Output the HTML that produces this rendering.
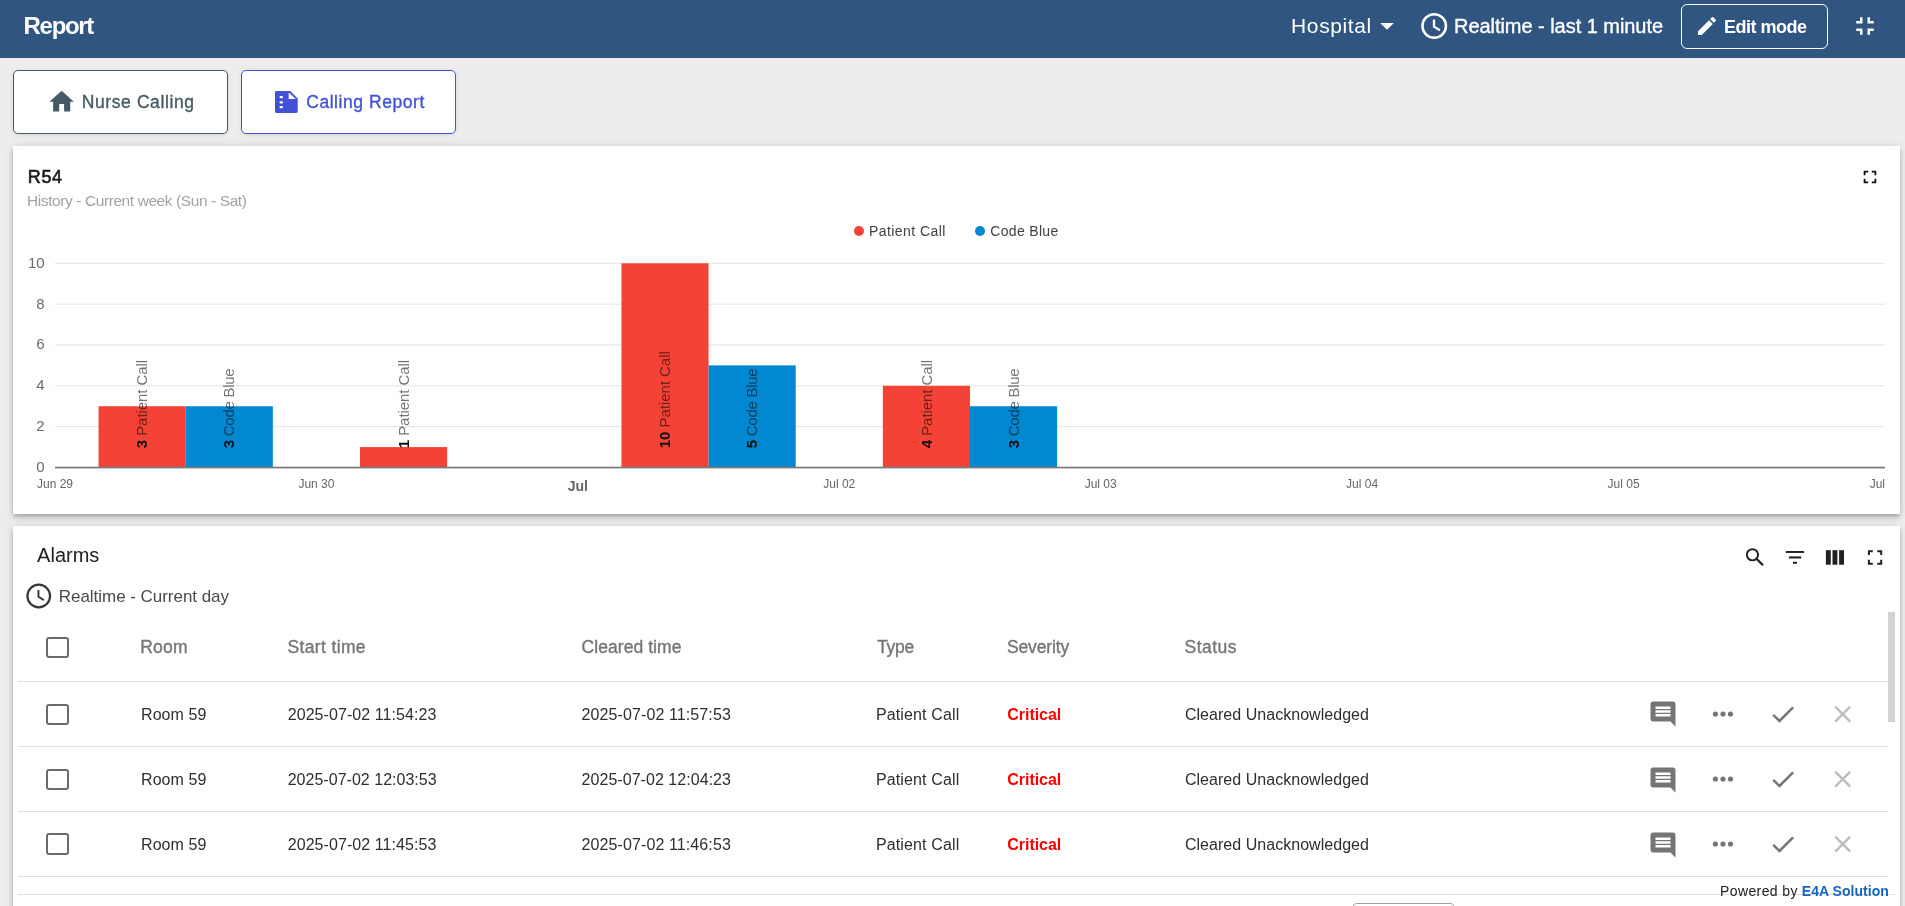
<!DOCTYPE html>
<html><head><meta charset="utf-8">
<style>
*{box-sizing:border-box;margin:0;padding:0}
html,body{width:1905px;height:906px;overflow:hidden}
body{background:#ededed;font-family:"Liberation Sans",sans-serif;position:relative}
.a{position:absolute;white-space:nowrap;line-height:1}
#root{position:absolute;left:0;top:0;width:1905px;height:906px;will-change:transform;overflow:hidden}
svg.a{overflow:visible}
#hdr{position:absolute;left:0;top:0;width:1905px;height:58px;background:#305580}
.btn{position:absolute;top:70px;width:215px;height:64px;background:#fff;border-radius:5px;box-shadow:0 1px 4px rgba(0,0,0,.10)}
.card{position:absolute;left:13px;width:1887px;background:#fff;box-shadow:0 2px 4px -1px rgba(0,0,0,.2),0 4px 5px 0 rgba(0,0,0,.14),0 1px 10px 0 rgba(0,0,0,.12)}
.hl{position:absolute;height:1px;background:#e0e0e0}
.cb{position:absolute;left:46px;width:22.5px;height:21.5px;border:2px solid #6b6b6b;border-radius:3px}
</style></head><body><div id="root">
<div id="hdr"></div>
<svg class="a" style="left:1376px;top:18px" width="22" height="16" viewBox="0 0 22 16"><path d="M4.16 4.95h13.7l-6.85 6.9z" fill="#fff"/></svg>
<svg class="a" style="left:1419px;top:11px" width="30" height="30" viewBox="0 0 30 30"><circle cx="15.2" cy="15.0" r="11.75" fill="none" stroke="#fff" stroke-width="2.5"/><path d="M15 8.4V15.7L20.9 19.3" fill="none" stroke="#fff" stroke-width="2.3"/></svg>
<div class="a" style="left:1681px;top:4px;width:147px;height:45px;border:1.5px solid #fff;border-radius:6px"></div>
<svg class="a" style="left:1695px;top:13.5px" width="24" height="24" viewBox="0 0 24 24"><path d="M3 17.25V21h3.75L17.81 9.94l-3.75-3.75L3 17.25zM20.71 7.04a.996.996 0 000-1.41l-2.34-2.34a.996.996 0 00-1.41 0l-1.83 1.83 3.75 3.75 1.83-1.83z" fill="#fff"/></svg>
<svg class="a" style="left:1849.75px;top:10.65px" width="30" height="30" viewBox="0 0 24 24"><path d="M5 16h3v3h2v-5H5v2zm3-8H5v2h5V5H8v3zm6 11h2v-3h3v-2h-5v5zm2-11V5h-2v5h5V8h-3z" fill="#fff"/></svg>

<div class="btn" style="left:13px;border:1.2px solid #455a64"></div>
<svg class="a" style="left:47.2px;top:87.15px" width="29.3" height="29.3" viewBox="0 0 24 24"><path d="M10 20v-6h4v6h5v-8h3L12 3 2 12h3v8z" fill="#455a64"/></svg>
<div class="btn" style="left:241px;border:1.2px solid #4152d9"></div>
<svg class="a" style="left:275px;top:91px" width="23" height="22" viewBox="0 0 23 22"><path d="M1.4 0H15.1L22.7 7.6V20.6A1.4 1.4 0 0 1 21.3 22H1.4A1.4 1.4 0 0 1 0 20.6V1.4A1.4 1.4 0 0 1 1.4 0z" fill="#4152d9"/><path d="M13.7 1.4V8H20.8z" fill="#fff"/><rect x="4.6" y="5.1" width="3.3" height="2.1" rx="0.6" fill="#fff"/><rect x="4.6" y="10.3" width="3.3" height="2.1" rx="0.6" fill="#fff"/><rect x="4.6" y="15.1" width="3.3" height="2.1" rx="0.6" fill="#fff"/></svg>

<div class="card" style="top:146px;height:368px"></div>
<svg class="a" style="left:1860px;top:167px" width="20" height="20" viewBox="0 0 24 24"><g transform="translate(12 12) scale(1.08) translate(-12 -12)"><path d="M7 14H5v5h5v-2H7v-3zm-2-4h2V7h3V5H5v5zm12 7h-3v2h5v-5h-2v3zM14 5v2h3v3h2V5h-5z" fill="#111"/></g></svg>
<svg class="a" style="left:13px;top:146px" width="1887" height="368" viewBox="13 146 1887 368" font-family="Liberation Sans">
<circle cx="859" cy="231" r="5" fill="#f44336"/><circle cx="980" cy="231" r="5" fill="#0288d1"/>
<rect x="55.0" y="426.16" width="1830.0" height="1" fill="#e3e3e3"/>
<rect x="55.0" y="385.32" width="1830.0" height="1" fill="#e3e3e3"/>
<rect x="55.0" y="344.48" width="1830.0" height="1" fill="#e3e3e3"/>
<rect x="55.0" y="303.64" width="1830.0" height="1" fill="#e3e3e3"/>
<rect x="55.0" y="262.80" width="1830.0" height="1" fill="#e3e3e3"/>
<text x="44.6" y="472.00" text-anchor="end" font-size="15" fill="#6b6b6b">0</text>
<text x="44.6" y="431.16" text-anchor="end" font-size="15" fill="#6b6b6b">2</text>
<text x="44.6" y="390.32" text-anchor="end" font-size="15" fill="#6b6b6b">4</text>
<text x="44.6" y="349.48" text-anchor="end" font-size="15" fill="#6b6b6b">6</text>
<text x="44.6" y="308.64" text-anchor="end" font-size="15" fill="#6b6b6b">8</text>
<text x="44.6" y="267.80" text-anchor="end" font-size="15" fill="#6b6b6b">10</text>
<rect x="98.57" y="406.24" width="87.14" height="61.26" fill="#f44336"/>
<rect x="185.71" y="406.24" width="87.14" height="61.26" fill="#0288d1"/>
<rect x="360.00" y="447.08" width="87.14" height="20.42" fill="#f44336"/>
<rect x="621.43" y="263.30" width="87.14" height="204.20" fill="#f44336"/>
<rect x="708.57" y="365.40" width="87.14" height="102.10" fill="#0288d1"/>
<rect x="882.86" y="385.82" width="87.14" height="81.68" fill="#f44336"/>
<rect x="970.00" y="406.24" width="87.14" height="61.26" fill="#0288d1"/>
<rect x="55.0" y="466.70" width="1830.0" height="1.7" fill="#7a7a7a"/>
<text transform="translate(147.34,448.2) rotate(-90)" font-size="15" textLength="88.4" lengthAdjust="spacing"><tspan font-weight="bold" fill="#111">3</tspan><tspan fill="rgba(0,0,0,0.55)"> Patient Call</tspan></text>
<text transform="translate(234.49,448.2) rotate(-90)" font-size="15" textLength="79.8" lengthAdjust="spacing"><tspan font-weight="bold" fill="#111">3</tspan><tspan fill="rgba(0,0,0,0.55)"> Code Blue</tspan></text>
<text transform="translate(408.77,448.2) rotate(-90)" font-size="15" textLength="88.4" lengthAdjust="spacing"><tspan font-weight="bold" fill="#111">1</tspan><tspan fill="rgba(0,0,0,0.55)"> Patient Call</tspan></text>
<text transform="translate(670.20,448.2) rotate(-90)" font-size="15" textLength="97.0" lengthAdjust="spacing"><tspan font-weight="bold" fill="#111">10</tspan><tspan fill="rgba(0,0,0,0.55)"> Patient Call</tspan></text>
<text transform="translate(757.34,448.2) rotate(-90)" font-size="15" textLength="79.8" lengthAdjust="spacing"><tspan font-weight="bold" fill="#111">5</tspan><tspan fill="rgba(0,0,0,0.55)"> Code Blue</tspan></text>
<text transform="translate(931.63,448.2) rotate(-90)" font-size="15" textLength="88.4" lengthAdjust="spacing"><tspan font-weight="bold" fill="#111">4</tspan><tspan fill="rgba(0,0,0,0.55)"> Patient Call</tspan></text>
<text transform="translate(1018.77,448.2) rotate(-90)" font-size="15" textLength="79.8" lengthAdjust="spacing"><tspan font-weight="bold" fill="#111">3</tspan><tspan fill="rgba(0,0,0,0.55)"> Code Blue</tspan></text>
<text x="55.00" y="487.5" text-anchor="middle" font-size="12" fill="#666">Jun 29</text>
<text x="316.43" y="487.5" text-anchor="middle" font-size="12" fill="#666">Jun 30</text>
<text x="577.86" y="491" text-anchor="middle" font-size="14" font-weight="bold" fill="#666">Jul</text>
<text x="839.29" y="487.5" text-anchor="middle" font-size="12" fill="#666">Jul 02</text>
<text x="1100.71" y="487.5" text-anchor="middle" font-size="12" fill="#666">Jul 03</text>
<text x="1362.14" y="487.5" text-anchor="middle" font-size="12" fill="#666">Jul 04</text>
<text x="1623.57" y="487.5" text-anchor="middle" font-size="12" fill="#666">Jul 05</text>
<text x="1885" y="487.5" text-anchor="end" font-size="12" fill="#666">Jul</text>
</svg>

<div class="card" style="top:526px;height:420px"></div>
<svg class="a" style="left:24px;top:581px" width="29" height="29" viewBox="0 0 29 29"><circle cx="14.75" cy="15.0" r="11.3" fill="none" stroke="#363636" stroke-width="2.2"/><path d="M14.45 9.0V15.8L19.9 19.1" fill="none" stroke="#363636" stroke-width="1.9"/></svg>
<svg class="a" style="left:1735px;top:540px" width="160" height="35" viewBox="1735 540 160 35">
<circle cx="1752.45" cy="554.75" r="5.6" fill="none" stroke="#212121" stroke-width="1.95"/>
<path d="M1756.5 558.8L1763 565.3" stroke="#212121" stroke-width="2.3"/>
<rect x="1785.8" y="551" width="18.3" height="1.95" fill="#212121"/>
<rect x="1788.9" y="556.4" width="12.3" height="2.1" fill="#212121"/>
<rect x="1792.9" y="561.8" width="4.1" height="1.95" fill="#212121"/>
<rect x="1825.9" y="550.2" width="4.9" height="14.5" fill="#212121"/>
<rect x="1832.5" y="550.2" width="4.9" height="14.5" fill="#212121"/>
<rect x="1839.1" y="550.2" width="4.9" height="14.5" fill="#212121"/>
<path d="M1867.9 555.1V550.2H1872.8V552.2H1869.9V555.1zM1882.2 555.1V550.2H1877.3V552.2H1880.2V555.1zM1867.9 559.8V564.7H1872.8V562.7H1869.9V559.8zM1882.2 559.8V564.7H1877.3V562.7H1880.2V559.8z" fill="#212121"/>
</svg>
<div class="a" style="left:1888px;top:612px;width:7px;height:110px;background:#d3d3d3"></div>
<div class="hl" style="top:680.9px;left:18px;width:1870px"></div>
<div class="hl" style="top:745.6px;left:18px;width:1870px"></div>
<div class="hl" style="top:810.9px;left:18px;width:1870px"></div>
<div class="hl" style="top:876.2px;left:18px;width:1870px"></div>
<div class="hl" style="top:894px;left:18px;width:1877px"></div>
<div class="cb" style="top:636.5px"></div>
<div class="cb" style="top:703.5px"></div>
<div class="cb" style="top:768.6px"></div>
<div class="cb" style="top:833.4px"></div>
<svg class="a" style="left:1648px;top:699.4px" width="30" height="30" viewBox="0 0 24 24"><path d="M21.99 4c0-1.1-.89-2-1.99-2H4c-1.1 0-2 .9-2 2v12c0 1.1.9 2 2 2h14l4 4-.01-18zM18 14H6v-2h12v2zm0-3H6V9h12v2zm0-3H6V6h12v2z" fill="#757575"/></svg>
<svg class="a" style="left:1708px;top:703.9px" width="30" height="20" viewBox="0 0 30 20"><circle cx="7.4" cy="10" r="2.6" fill="#757575"/><circle cx="15" cy="10" r="2.6" fill="#757575"/><circle cx="22.5" cy="10" r="2.6" fill="#757575"/></svg>
<svg class="a" style="left:1760px;top:693.9px" width="100" height="40" viewBox="1760 693.9 100 40"><path d="M1773.2 714.7L1779.5 720.9L1793.1 707.2" fill="none" stroke="#757575" stroke-width="2.5"/><path d="M1835.2 706.6L1850.2 721.6M1850.2 706.6L1835.2 721.6" fill="none" stroke="#bdbdbd" stroke-width="2.4"/></svg>
<svg class="a" style="left:1648px;top:764.5px" width="30" height="30" viewBox="0 0 24 24"><path d="M21.99 4c0-1.1-.89-2-1.99-2H4c-1.1 0-2 .9-2 2v12c0 1.1.9 2 2 2h14l4 4-.01-18zM18 14H6v-2h12v2zm0-3H6V9h12v2zm0-3H6V6h12v2z" fill="#757575"/></svg>
<svg class="a" style="left:1708px;top:769.0px" width="30" height="20" viewBox="0 0 30 20"><circle cx="7.4" cy="10" r="2.6" fill="#757575"/><circle cx="15" cy="10" r="2.6" fill="#757575"/><circle cx="22.5" cy="10" r="2.6" fill="#757575"/></svg>
<svg class="a" style="left:1760px;top:759.0px" width="100" height="40" viewBox="1760 693.9 100 40"><path d="M1773.2 714.7L1779.5 720.9L1793.1 707.2" fill="none" stroke="#757575" stroke-width="2.5"/><path d="M1835.2 706.6L1850.2 721.6M1850.2 706.6L1835.2 721.6" fill="none" stroke="#bdbdbd" stroke-width="2.4"/></svg>
<svg class="a" style="left:1648px;top:829.6px" width="30" height="30" viewBox="0 0 24 24"><path d="M21.99 4c0-1.1-.89-2-1.99-2H4c-1.1 0-2 .9-2 2v12c0 1.1.9 2 2 2h14l4 4-.01-18zM18 14H6v-2h12v2zm0-3H6V9h12v2zm0-3H6V6h12v2z" fill="#757575"/></svg>
<svg class="a" style="left:1708px;top:834.1px" width="30" height="20" viewBox="0 0 30 20"><circle cx="7.4" cy="10" r="2.6" fill="#757575"/><circle cx="15" cy="10" r="2.6" fill="#757575"/><circle cx="22.5" cy="10" r="2.6" fill="#757575"/></svg>
<svg class="a" style="left:1760px;top:824.1px" width="100" height="40" viewBox="1760 693.9 100 40"><path d="M1773.2 714.7L1779.5 720.9L1793.1 707.2" fill="none" stroke="#757575" stroke-width="2.5"/><path d="M1835.2 706.6L1850.2 721.6M1850.2 706.6L1835.2 721.6" fill="none" stroke="#bdbdbd" stroke-width="2.4"/></svg>
<div class="a" style="left:1352px;top:903px;width:103px;height:30px;border:1.5px solid #9e9e9e;border-radius:5px"></div>
<div class="a" style="left:23.6px;top:14.0px;font-size:24px;font-weight:bold;color:#ffffff;letter-spacing:-1.32px;">Report</div>
<div class="a" style="left:1291.1px;top:15.0px;font-size:21px;color:#ffffff;letter-spacing:0.6px;">Hospital</div>
<div class="a" style="left:1454.0px;top:16.0px;font-size:20px;-webkit-text-stroke:0.35px currentColor;color:#ffffff;letter-spacing:-0.043px;">Realtime - last 1 minute</div>
<div class="a" style="left:1724.0px;top:18.0px;font-size:18px;font-weight:bold;color:#ffffff;letter-spacing:-0.5px;">Edit mode</div>
<div class="a" style="left:81.8px;top:94.0px;font-size:17.5px;-webkit-text-stroke:0.35px currentColor;color:#455a64;letter-spacing:0.592px;">Nurse Calling</div>
<div class="a" style="left:306.2px;top:94.0px;font-size:17.5px;-webkit-text-stroke:0.35px currentColor;color:#4152d9;letter-spacing:0.554px;">Calling Report</div>
<div class="a" style="left:27.8px;top:168.0px;font-size:18px;-webkit-text-stroke:0.35px currentColor;color:#1a1a1a;letter-spacing:0.65px;-webkit-text-stroke:0.6px #1a1a1a;">R54</div>
<div class="a" style="left:27.0px;top:193.0px;font-size:15.5px;color:#a3a3a3;letter-spacing:-0.409px;">History - Current week (Sun - Sat)</div>
<div class="a" style="left:868.9px;top:224.0px;font-size:14px;color:#404040;letter-spacing:0.445px;">Patient Call</div>
<div class="a" style="left:990.2px;top:224.0px;font-size:14px;color:#404040;letter-spacing:0.338px;">Code Blue</div>
<div class="a" style="left:37.1px;top:545.0px;font-size:20px;color:#212121;letter-spacing:-0.0px;">Alarms</div>
<div class="a" style="left:58.8px;top:588.0px;font-size:17px;color:#4a4a4a;letter-spacing:-0.038px;">Realtime - Current day</div>
<div class="a" style="left:140.2px;top:639.0px;font-size:17.5px;-webkit-text-stroke:0.35px currentColor;color:#757575;letter-spacing:0.267px;">Room</div>
<div class="a" style="left:287.5px;top:639.0px;font-size:17.5px;-webkit-text-stroke:0.35px currentColor;color:#757575;letter-spacing:0.356px;">Start time</div>
<div class="a" style="left:581.6px;top:639.0px;font-size:17.5px;-webkit-text-stroke:0.35px currentColor;color:#757575;letter-spacing:0.055px;">Cleared time</div>
<div class="a" style="left:877.2px;top:639.0px;font-size:17.5px;-webkit-text-stroke:0.35px currentColor;color:#757575;letter-spacing:-0.333px;">Type</div>
<div class="a" style="left:1007.0px;top:639.0px;font-size:17.5px;-webkit-text-stroke:0.35px currentColor;color:#757575;letter-spacing:-0.143px;">Severity</div>
<div class="a" style="left:1184.5px;top:639.0px;font-size:17.5px;-webkit-text-stroke:0.35px currentColor;color:#757575;letter-spacing:0.48px;">Status</div>
<div class="a" style="left:141.0px;top:707.0px;font-size:16px;color:#2e2e2e;letter-spacing:0.083px;">Room 59</div>
<div class="a" style="left:287.7px;top:707.0px;font-size:16px;color:#2e2e2e;letter-spacing:0.078px;">2025-07-02 11:54:23</div>
<div class="a" style="left:581.6px;top:707.0px;font-size:16px;color:#2e2e2e;letter-spacing:0.1px;">2025-07-02 11:57:53</div>
<div class="a" style="left:875.9px;top:707.0px;font-size:16px;color:#2e2e2e;letter-spacing:0.136px;">Patient Call</div>
<div class="a" style="left:1007.3px;top:707.0px;font-size:16px;font-weight:bold;color:#ff0000;letter-spacing:-0.043px;">Critical</div>
<div class="a" style="left:1184.9px;top:707.0px;font-size:16px;color:#2e2e2e;letter-spacing:0.038px;">Cleared Unacknowledged</div>
<div class="a" style="left:141.0px;top:772.0px;font-size:16px;color:#2e2e2e;letter-spacing:0.083px;">Room 59</div>
<div class="a" style="left:287.7px;top:772.0px;font-size:16px;color:#2e2e2e;letter-spacing:0.022px;">2025-07-02 12:03:53</div>
<div class="a" style="left:581.6px;top:772.0px;font-size:16px;color:#2e2e2e;letter-spacing:0.044px;">2025-07-02 12:04:23</div>
<div class="a" style="left:875.9px;top:772.0px;font-size:16px;color:#2e2e2e;letter-spacing:0.136px;">Patient Call</div>
<div class="a" style="left:1007.3px;top:772.0px;font-size:16px;font-weight:bold;color:#ff0000;letter-spacing:-0.043px;">Critical</div>
<div class="a" style="left:1184.9px;top:772.0px;font-size:16px;color:#2e2e2e;letter-spacing:0.038px;">Cleared Unacknowledged</div>
<div class="a" style="left:141.0px;top:837.0px;font-size:16px;color:#2e2e2e;letter-spacing:0.083px;">Room 59</div>
<div class="a" style="left:287.7px;top:837.0px;font-size:16px;color:#2e2e2e;letter-spacing:0.078px;">2025-07-02 11:45:53</div>
<div class="a" style="left:581.6px;top:837.0px;font-size:16px;color:#2e2e2e;letter-spacing:0.1px;">2025-07-02 11:46:53</div>
<div class="a" style="left:875.9px;top:837.0px;font-size:16px;color:#2e2e2e;letter-spacing:0.136px;">Patient Call</div>
<div class="a" style="left:1007.3px;top:837.0px;font-size:16px;font-weight:bold;color:#ff0000;letter-spacing:-0.043px;">Critical</div>
<div class="a" style="left:1184.9px;top:837.0px;font-size:16px;color:#2e2e2e;letter-spacing:0.038px;">Cleared Unacknowledged</div>
<div class="a" style="left:1720.0px;top:884.0px;font-size:14px;color:#212121;letter-spacing:0.389px;">Powered by</div>
<div class="a" style="left:1801.8px;top:884.0px;font-size:14px;font-weight:bold;color:#1565c0;letter-spacing:0.045px;">E4A Solution</div>
</div></body></html>
